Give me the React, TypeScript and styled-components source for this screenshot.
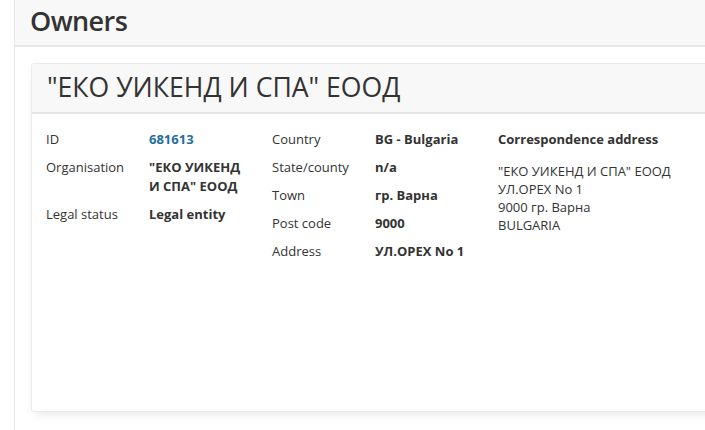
import React from "react";
import styled, { createGlobalStyle } from "styled-components";

const Global = createGlobalStyle`
  html, body { margin: 0; padding: 0; background: #fff; }
  body { font-family: "Open Sans", "Noto Sans", sans-serif; color: #333; overflow: hidden; }
`;

const Page = styled.div`
  padding-left: 14px;
  width: 760px;
`;

const Panel = styled.section`
  border-left: 1px solid #e8e8e8;
  background: #fff;
`;

const PanelHeader = styled.header`
  background: #f8f8f8;
  border-bottom: 2px solid #e6e6e6;
  box-sizing: border-box;
  height: 47px;
  display: flex;
  align-items: center;
  padding: 0 0 4px 15px;
`;

const PanelTitle = styled.h1`
  margin: 0;
  font-size: 27px;
  font-weight: 600;
  letter-spacing: -0.6px;
  color: #333;
  line-height: 1;
`;

const PanelBody = styled.div`
  padding: 16px 0 18px 16px;
`;

const Card = styled.article`
  border: 1px solid #ebebeb;
  border-radius: 3px;
  background: #fff;
  height: 349px;
  box-sizing: border-box;
  box-shadow: 0 6px 10px -4px rgba(0, 0, 0, 0.1);
`;

const CardHeader = styled.header`
  background: #f8f8f8;
  border-bottom: 2px solid #e6e6e6;
  height: 50px;
  box-sizing: border-box;
  display: flex;
  align-items: center;
  padding: 0 0 2px 15px;
  border-radius: 3px 3px 0 0;
`;

const CardTitle = styled.h2`
  margin: 0;
  font-size: 26.6px;
  font-weight: 400;
  color: #333;
  line-height: 1;
`;

const CardBody = styled.div`
  display: grid;
  grid-template-columns: 226px 226px 226px;
  padding: 16px 0 0 14px;
  font-size: 13px;
`;

const FieldList = styled.dl`
  margin: 0;
  display: grid;
  grid-template-columns: 103px 1fr;
  row-gap: 9.4px;
  align-content: start;
`;

const Label = styled.dt`
  margin: 0;
  line-height: 18.6px;
  color: #333;
`;

const Value = styled.dd<{ $link?: boolean }>`
  margin: 0;
  line-height: 18.6px;
  font-weight: 700;
  color: ${(p) => (p.$link ? "#1f6e9e" : "#333")};
  padding-right: 26px;
`;

const AddressBlock = styled.div`
  display: flex;
  flex-direction: column;
`;

const AddressHeading = styled.div`
  font-weight: 700;
  line-height: 18.6px;
  margin-bottom: 13px;
`;

const AddressLine = styled.div`
  line-height: 18px;
`;

export default function App() {
  return (
    <Page>
      <Global />
      <Panel>
        <PanelHeader>
          <PanelTitle>Owners</PanelTitle>
        </PanelHeader>
        <PanelBody>
          <Card>
            <CardHeader>
              <CardTitle>"ЕКО УИКЕНД И СПА" ЕООД</CardTitle>
            </CardHeader>
            <CardBody>
              <FieldList>
                <Label>ID</Label>
                <Value $link>681613</Value>
                <Label>Organisation</Label>
                <Value>"ЕКО УИКЕНД И СПА" ЕООД</Value>
                <Label>Legal status</Label>
                <Value>Legal entity</Value>
              </FieldList>
              <FieldList>
                <Label>Country</Label>
                <Value>BG - Bulgaria</Value>
                <Label>State/county</Label>
                <Value>n/a</Value>
                <Label>Town</Label>
                <Value>гр. Варна</Value>
                <Label>Post code</Label>
                <Value>9000</Value>
                <Label>Address</Label>
                <Value>УЛ.ОРЕХ No 1</Value>
              </FieldList>
              <AddressBlock>
                <AddressHeading>Correspondence address</AddressHeading>
                <AddressLine>"ЕКО УИКЕНД И СПА" ЕООД</AddressLine>
                <AddressLine>УЛ.ОРЕХ No 1</AddressLine>
                <AddressLine>9000 гр. Варна</AddressLine>
                <AddressLine>BULGARIA</AddressLine>
              </AddressBlock>
            </CardBody>
          </Card>
        </PanelBody>
      </Panel>
    </Page>
  );
}
